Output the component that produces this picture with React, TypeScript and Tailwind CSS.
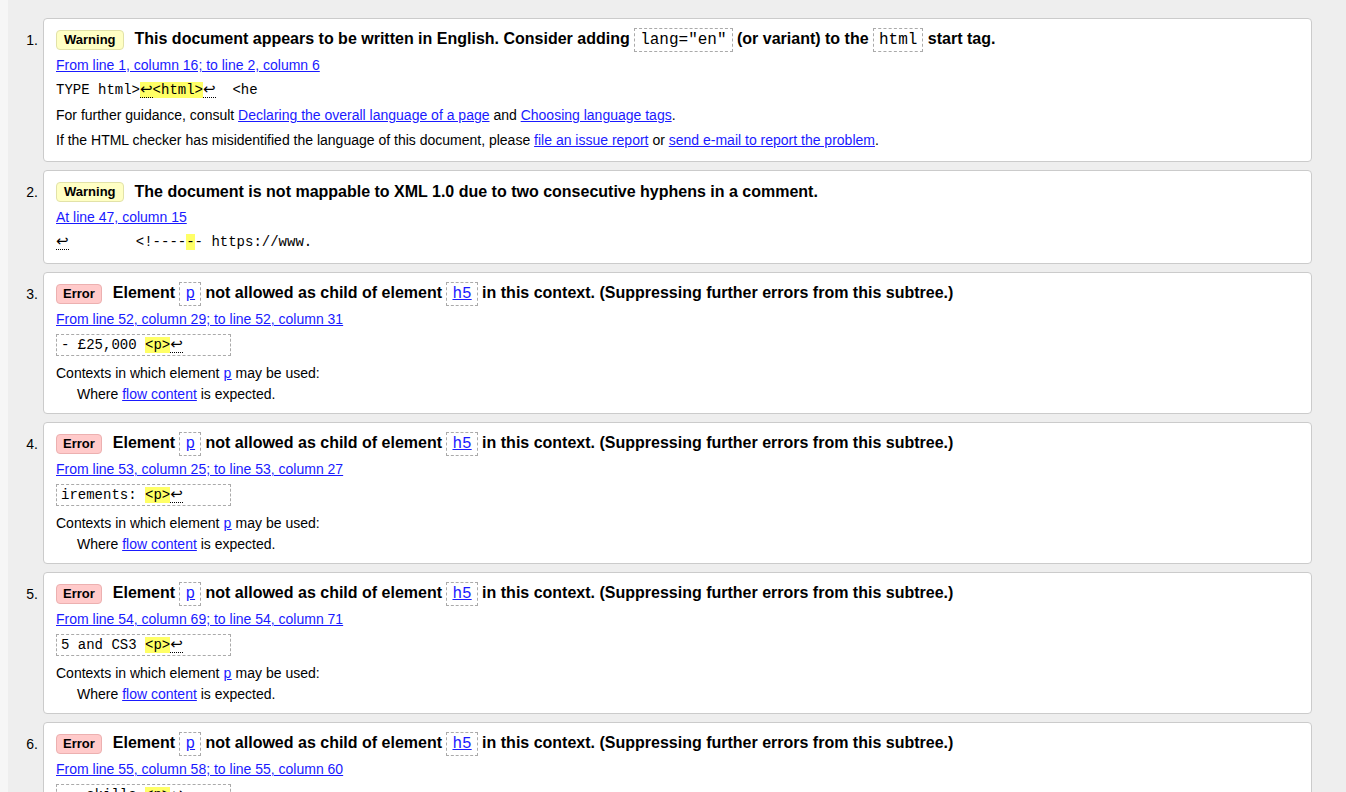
import React from "react";

const sans = "font-['Liberation_Sans',Arial,sans-serif]";
const mono = "font-['Liberation_Mono','Courier_New',monospace]";

function Badge({ kind }: { kind: "Warning" | "Error" }) {
  const tone =
    kind === "Warning"
      ? "bg-[#ffffc4] border-[#e2e2a8] px-[7px]"
      : "bg-[#ffcaca] border-[#ecb0b0] px-[6px]";
  return (
    <span
      className={`inline-flex h-5 items-center rounded-[4px] border text-[13px] font-bold text-black ${tone}`}
    >
      {kind}
    </span>
  );
}

function Code({ children, link }: { children: React.ReactNode; link?: boolean }) {
  return (
    <span
      className={`inline-block border border-dashed border-[#aaa] px-[5px] py-[1px] align-middle text-[16px] leading-[20px] font-normal ${mono} ${
        link ? "text-[#1a1aff] underline" : "text-black"
      }`}
    >
      {children}
    </span>
  );
}

function Ret() {
  return (
    <span className="inline-block border-b border-dotted border-black font-['DejaVu_Sans',sans-serif] text-[15px] leading-[16px]">
      ↩
    </span>
  );
}

function Mark({ children }: { children: React.ReactNode }) {
  return <span className="bg-[#ffff66]">{children}</span>;
}

function A({ children, mono: m }: { children: React.ReactNode; mono?: boolean }) {
  return (
    <a href="#" className={`text-[#1a1aff] underline ${m ? mono : ""}`}>
      {children}
    </a>
  );
}

interface ItemProps {
  n: number;
  kind: "Warning" | "Error";
  title: React.ReactNode;
  where: string;
  children: React.ReactNode;
}

function Item({ n, kind, title, where, children }: ItemProps) {
  return (
    <li className="mb-2 flex">
      <div className="w-[35px] shrink-0 pr-[5px] pt-[12px] text-right text-[14px] leading-[20px] text-black">
        {n}.
      </div>
      <div className="flex-1 rounded-[4px] border border-[#cbcbcb] bg-white pb-2 pl-3 pr-3 pt-[11px]">
        <div className="mb-[3px] flex h-5 items-center gap-[11px]">
          <Badge kind={kind} />
          <h2 className="whitespace-nowrap text-[16px] font-bold leading-[20px] text-black">{title}</h2>
        </div>
        <div className="text-[14px] leading-[25px]">
          <A>{where}</A>
        </div>
        {children}
      </div>
    </li>
  );
}

function ErrorBody({ extract }: { extract: string }) {
  return (
    <>
      <div
        className={`mt-[2px] h-[22px] w-[175px] whitespace-pre border border-dashed border-[#aaa] px-[4px] text-[14px] leading-[20px] text-black ${mono}`}
      >
        {extract}
        <Mark>{"<p>"}</Mark>
        <Ret />
      </div>
      <dl className="mt-[7px] text-[14px] leading-[21px] text-black">
        <dt className="h-[21px] overflow-hidden">
          Contexts in which element <A mono>p</A> may be used:
        </dt>
        <dd className="ml-[21px] h-[21px]">
          Where <A>flow content</A> is expected.
        </dd>
      </dl>
    </>
  );
}

function errTitle() {
  return (
    <>
      Element <Code link>p</Code> not allowed as child of element <Code link>h5</Code> in this context.
      (Suppressing further errors from this subtree.)
    </>
  );
}

export default function App() {
  return (
    <div className={`min-h-screen bg-[#f6f6f6] pl-2 ${sans}`}>
      <ol className="min-h-screen bg-[#eeeeee] pr-[34px] pt-[18px]">
        <Item
          n={1}
          kind="Warning"
          where="From line 1, column 16; to line 2, column 6"
          title={
            <>
              This document appears to be written in English. Consider adding <Code>lang="en"</Code> (or
              variant) to the <Code>html</Code> start tag.
            </>
          }
        >
          <div className={`whitespace-pre text-[14px] leading-[25px] text-black ${mono}`}>
            {"TYPE html>"}
            <Mark>
              <Ret />
              {"<html>"}
            </Mark>
            <Ret />
            {"  <he"}
          </div>
          <p className="text-[14px] leading-[25px] text-black">
            For further guidance, consult <A>Declaring the overall language of a page</A> and{" "}
            <A>Choosing language tags</A>.
          </p>
          <p className="text-[14px] leading-[25px] text-black">
            If the HTML checker has misidentified the language of this document, please{" "}
            <A>file an issue report</A> or <A>send e-mail to report the problem</A>.
          </p>
        </Item>

        <Item
          n={2}
          kind="Warning"
          where="At line 47, column 15"
          title="The document is not mappable to XML 1.0 due to two consecutive hyphens in a comment."
        >
          <div className={`whitespace-pre text-[14px] leading-[25px] text-black ${mono}`}>
            <Ret />
            {"        <!----"}
            <Mark>-</Mark>
            {"- https://www."}
          </div>
        </Item>

        <Item n={3} kind="Error" where="From line 52, column 29; to line 52, column 31" title={errTitle()}>
          <ErrorBody extract="- £25,000 " />
        </Item>
        <Item n={4} kind="Error" where="From line 53, column 25; to line 53, column 27" title={errTitle()}>
          <ErrorBody extract="irements: " />
        </Item>
        <Item n={5} kind="Error" where="From line 54, column 69; to line 54, column 71" title={errTitle()}>
          <ErrorBody extract="5 and CS3 " />
        </Item>
        <Item n={6} kind="Error" where="From line 55, column 58; to line 55, column 60" title={errTitle()}>
          <ErrorBody extract="   skills " />
        </Item>
      </ol>
    </div>
  );
}
